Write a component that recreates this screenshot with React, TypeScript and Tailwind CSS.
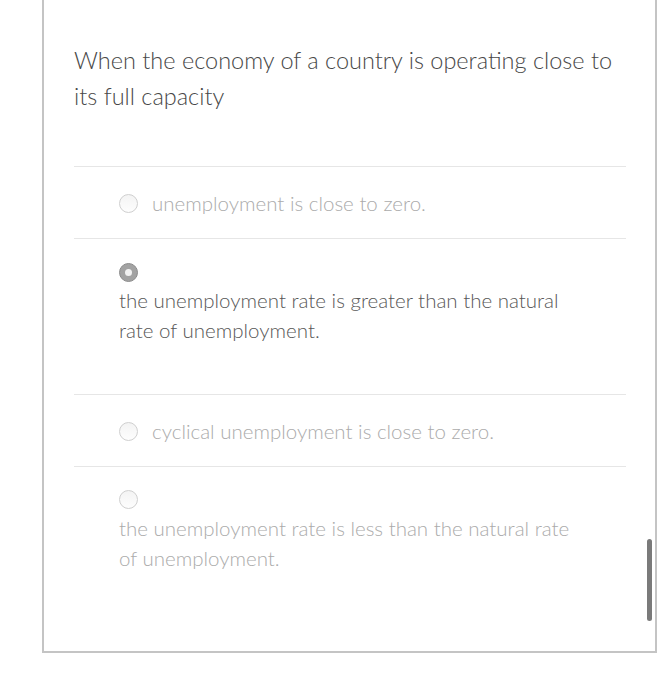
import React from "react";

type Opt = { text: string; selected?: boolean; stacked?: boolean };

const options: Opt[] = [
  { text: "unemployment is close to zero." },
  { text: "the unemployment rate is greater than the natural rate of unemployment.", selected: true, stacked: true },
  { text: "cyclical unemployment is close to zero." },
  { text: "the unemployment rate is less than the natural rate of unemployment.", stacked: true },
];

function Radio({ selected }: { selected?: boolean }) {
  if (selected) {
    return (
      <span className="flex h-[19px] w-[19px] shrink-0 items-center justify-center rounded-full border border-[#8c8c8c] bg-[#a3a3a3]">
        <span className="h-[7px] w-[7px] rounded-full bg-[#f2f2f2]" />
      </span>
    );
  }
  return (
    <span className="block h-[19px] w-[19px] shrink-0 rounded-full border border-[#cfcfcf] bg-gradient-to-b from-[#f4f4f4] to-[#fdfdfd]" />
  );
}

export default function App() {
  return (
    <div className="relative h-[700px] w-[657px] bg-white" style={{ fontFamily: "Lato, 'Open Sans', sans-serif" }}>
      <div className="ml-[42px] h-[653px] w-[615px] border-b-2 border-l-2 border-r-2 border-[#c4c4c4] pl-[30px] pr-[29px] pt-[42px]">
        <p className="text-[23.5px] font-light leading-[36px] text-[#484848]">
          When the economy of a country is operating close to its full capacity
        </p>
        <div className="mt-[52px]">
          {options.map((o, i) =>
            o.stacked ? (
              <div
                key={i}
                className={`border-t border-[#e6e6e6] pl-[45px] ${i === 1 ? "pb-[49px] pt-[24px]" : "pb-[40px] pt-[23px]"}`}
              >
                <Radio selected={o.selected} />
                <p
                  className={`max-w-[470px] text-[20.5px] font-light leading-[30px] ${o.selected ? "mt-[3px] text-[#575757]" : "mt-[4px] text-[#ababab]"}`}
                >
                  {o.text}
                </p>
              </div>
            ) : (
              <div key={i} className="flex h-[72px] items-center gap-[14px] border-t border-[#e6e6e6] pl-[45px] pt-[2px]">
                <Radio />
                <span className="text-[20.5px] font-light text-[#ababab]">{o.text}</span>
              </div>
            )
          )}
        </div>
      </div>
      <div className="absolute left-[647px] top-[539px] h-[82px] w-[5px] rounded-full bg-[#7a7a7a]" />
    </div>
  );
}
